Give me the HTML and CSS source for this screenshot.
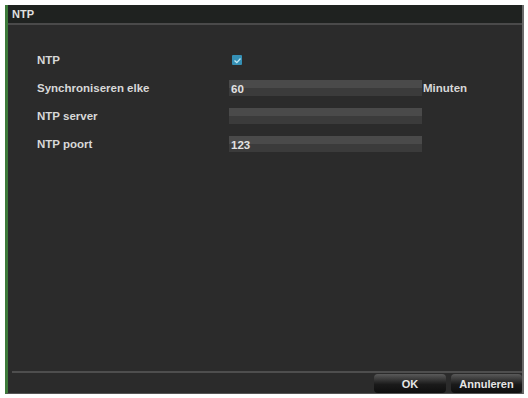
FILE: index.html
```html
<!DOCTYPE html>
<html lang="nl">
<head>
    <meta charset="UTF-8">
    <title>NTP</title>
    <link rel="stylesheet" href="styles.css">
</head>
<body>
    <div class="venster">
        <div class="titel">NTP</div>
        <div class="inhoud">
            <div class="rij">
                <span class="label">NTP</span>
                <span class="vinkje">
                    <svg width="9" height="9" viewBox="0 0 9 9"><path d="M1.5 4.5 L3.8 6.6 L7.5 2.5" fill="none" stroke="#bfe8f5" stroke-width="1.3"/></svg>
                </span>
            </div>
            <div class="rij">
                <span class="label">Synchroniseren elke</span>
                <span class="veld">60</span>
                <span class="eenheid">Minuten</span>
            </div>
            <div class="rij">
                <span class="label">NTP server</span>
                <span class="veld"></span>
            </div>
            <div class="rij">
                <span class="label">NTP poort</span>
                <span class="veld">123</span>
            </div>
        </div>
        <div class="voet">
            <button class="knop ok">OK</button>
            <button class="knop">Annuleren</button>
        </div>
    </div>
</body>
</html>
```

FILE: styles.css
```css
* {
    font-family: "Liberation Sans", Arial, sans-serif;
    box-sizing: border-box;
}
body {
    margin: 0;
    background: #fff;
    padding: 5px 4px 4px 5px;
}
.venster {
    height: 389px;
    background: #2b2b2b;
    border-left: 3px solid #3d7a3a;
    border-right: 2px solid #6a6a6a;
    border-bottom: 1px solid #555;
    display: flex;
    flex-direction: column;
}
.titel {
    height: 20px;
    background: #1f2220;
    border-bottom: 2px solid #4a4a4a;
    color: #e0e0e0;
    font-size: 11px;
    font-weight: bold;
    padding: 3px 0 0 4px;
}
.inhoud {
    flex: 1;
    padding: 21px 0 0 29px;
}
.rij {
    display: flex;
    align-items: center;
    height: 28px;
}
.label {
    width: 192px;
    color: #d8d8d8;
    font-size: 11.5px;
    font-weight: bold;
}
.vinkje {
    width: 10px;
    height: 10px;
    margin-left: 3px;
    background: #3590b5;
    border-radius: 1px;
    display: flex;
    align-items: center;
    justify-content: center;
}
.veld {
    width: 193px;
    height: 16px;
    background: linear-gradient(#4a4a4a 0, #4a4a4a 50%, #3b3b3b 50%, #3b3b3b 100%);
    color: #e2e2e2;
    font-size: 11.5px;
    font-weight: bold;
    padding: 3px 0 0 2px;
}
.eenheid {
    color: #d8d8d8;
    font-size: 11.5px;
    font-weight: bold;
    margin-left: 1px;
}
.voet {
    height: 21px;
    margin: 0 0 1px 4px;
    border-top: 2px solid #4e4e4e;
    display: flex;
    justify-content: flex-end;
    gap: 5px;
    padding-top: 1px;
}
.knop {
    width: 71px;
    height: 19px;
    border: 0;
    border-radius: 4px;
    background: linear-gradient(#5a5a5a, #1a1a1a 55%, #0e0e0e);
    color: #e6e6e6;
    font-size: 11px;
    font-weight: bold;
    padding: 0;
}
.ok {
    width: 72px;
}
```
